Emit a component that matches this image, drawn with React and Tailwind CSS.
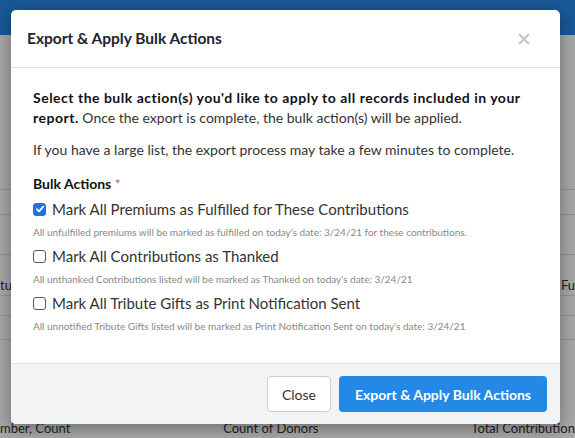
import React, { useState } from 'react';

const font = { fontFamily: 'Lato, "Open Sans", sans-serif' };

const ACTIONS = [
  { id: 'premiums', label: 'Mark All Premiums as Fulfilled for These Contributions', help: "All unfulfilled premiums will be marked as fulfilled on today's date: 3/24/21 for these contributions.", checked: true },
  { id: 'thanked', label: 'Mark All Contributions as Thanked', help: "All unthanked Contributions listed will be marked as Thanked on today's date: 3/24/21", checked: false },
  { id: 'tribute', label: 'Mark All Tribute Gifts as Print Notification Sent', help: "All unnotified Tribute Gifts listed will be marked as Print Notification Sent on today's date: 3/24/21", checked: false },
];

function Checkbox({ checked, onChange }) {
  return (
    <button
      type="button"
      onClick={onChange}
      className={`w-[13px] h-[13px] rounded-[3px] flex items-center justify-center shrink-0 ${checked ? 'bg-[#1a73e8] border border-[#1a73e8]' : 'bg-white border border-[#555]'}`}
    >
      {checked && (
        <svg width="10" height="10" viewBox="0 0 10 10" fill="none">
          <path d="M1.8 5.2 L4 7.4 L8.3 2.6" stroke="white" strokeWidth="1.8" strokeLinecap="round" strokeLinejoin="round" />
        </svg>
      )}
    </button>
  );
}

export default function App() {
  const [checked, setChecked] = useState(ACTIONS.map(a => a.checked));

  return (
    <div className="relative w-[575px] h-[438px] overflow-hidden bg-white" style={font}>
      {/* page behind the modal */}
      <div className="h-[35px] bg-[#2587e6]" />
      <div className="text-[13px] text-[#333]">
        <div className="h-[155px] border-b border-[#ddd]" />
        <div className="h-[25px] border-b border-[#ddd]" />
        <div className="h-[40px] border-b border-[#ddd]" />
        <div className="h-[41px] border-b border-[#ddd] flex items-end justify-between">
          <span>tu</span>
          <span>Fu</span>
        </div>
        <div className="h-[20px] border-b border-[#ddd]" />
        <div className="h-[24px] border-b border-[#ddd]" />
        <div className="h-[100px] flex items-end justify-between px-[0px] pb-[2px]">
          <span>mber, Count</span>
          <span>Count of Donors</span>
          <span>Total Contribution</span>
        </div>
        <div className="flex justify-between leading-[14px]">
          <span className="pl-4">0</span>
          <span>0</span>
          <span className="pr-4">$175</span>
        </div>
      </div>

      {/* overlay */}
      <div className="absolute inset-0 bg-black/35" />

      {/* modal */}
      <div className="absolute left-[11px] top-[10px] w-[549px] bg-white rounded-[5px] shadow-[0_4px_16px_rgba(0,0,0,0.35)] overflow-hidden">
        <div className="h-[58px] flex items-center justify-between pl-[16px] pr-[30px] border-b border-[#dee2e6]">
          <h2 className="text-[15.5px] font-bold text-[#212529]">Export &amp; Apply Bulk Actions</h2>
          <button className="text-[#c4c4c4]">
            <svg width="12" height="12" viewBox="0 0 12 12">
              <path d="M1 1 L11 11 M11 1 L1 11" stroke="currentColor" strokeWidth="2" />
            </svg>
          </button>
        </div>

        <div className="px-[22px] pt-[20px] pb-[29px] text-[14px] text-[#333]">
          <p className="leading-[20px]">
            <span className="font-bold text-[#111] tracking-[0.5px]">Select the bulk action(s) you'd like to apply to all records included in your report.</span>{' '}
            Once the export is complete, the bulk action(s) will be applied.
          </p>
          <p className="mt-[12px] leading-[20px]">If you have a large list, the export process may take a few minutes to complete.</p>

          <div className="mt-[14px] font-bold text-[#111] leading-[20px]">
            Bulk Actions <span className="text-[#e05a5a] font-normal">*</span>
          </div>

          <div className="mt-[5px] flex flex-col gap-[6px]">
            {ACTIONS.map((a, i) => (
              <div key={a.id}>
                <label className="flex items-center gap-[6px] h-[20px] text-[15px] text-[#333]">
                  <Checkbox checked={checked[i]} onChange={() => setChecked(c => c.map((v, j) => (j === i ? !v : v)))} />
                  {a.label}
                </label>
                <div className="mt-[5px] text-[10px] text-[#888] leading-[16px]">{a.help}</div>
              </div>
            ))}
          </div>
        </div>

        <div className="bg-[#f1f3f5] border-t border-[#dee2e6] h-[61px] flex items-center justify-end gap-[8px] px-[13px]">
          <button className="h-[36px] px-[14px] bg-white border border-[#ccc] rounded-[4px] text-[14px] text-[#333]">Close</button>
          <button className="h-[36px] px-[16px] bg-[#2489e6] rounded-[4px] text-[14px] font-bold text-white">Export &amp; Apply Bulk Actions</button>
        </div>
      </div>
    </div>
  );
}
